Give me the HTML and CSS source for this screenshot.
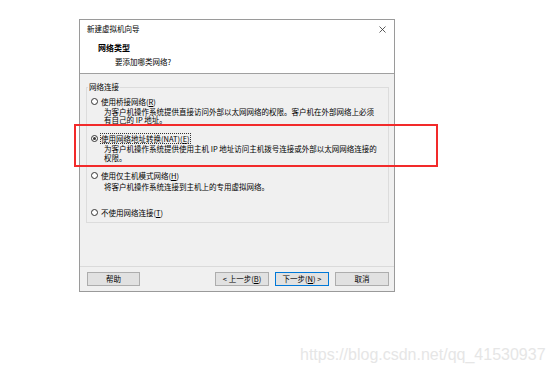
FILE: index.html
```html
<!DOCTYPE html>
<html lang="zh-CN">
<head>
  <meta charset="UTF-8">
  <meta name="viewport" content="width=device-width, initial-scale=1.0">
  <title>新建虚拟机向导</title>
  <link rel="stylesheet" href="styles.css">
</head>
<body>
  <div class="wizard">
    <div class="titlebar">
      <span class="title">新建虚拟机向导</span>
      <svg class="close" width="7" height="7" viewBox="0 0 7 7">
        <path d="M0.5 0.5 L6.5 6.5 M6.5 0.5 L0.5 6.5" stroke="#333" stroke-width="0.8" fill="none"/>
      </svg>
    </div>

    <div class="header">
      <div class="header-title">网络类型</div>
      <div class="header-sub">要添加哪类网络?</div>
    </div>

    <div class="content">
      <fieldset class="group">
        <legend>网络连接</legend>

        <div class="option">
          <div class="option-label"><span class="radio"></span><span>使用桥接网络(<u>R</u>)</span></div>
          <div class="option-desc">
            <div>为客户机操作系统提供直接访问外部以太网网络的权限。客户机在外部网络上必须</div>
            <div>有自己的 IP 地址。</div>
          </div>
        </div>

        <div class="option">
          <div class="option-label"><span class="radio checked"></span><span class="focus">使用网络地址转换(NAT)(<u>E</u>)</span></div>
          <div class="option-desc">
            <div>为客户机操作系统提供使用主机 IP 地址访问主机拨号连接或外部以太网网络连接的</div>
            <div>权限。</div>
          </div>
        </div>

        <div class="option">
          <div class="option-label"><span class="radio"></span><span>使用仅主机模式网络(<u>H</u>)</span></div>
          <div class="option-desc">
            <div>将客户机操作系统连接到主机上的专用虚拟网络。</div>
          </div>
        </div>

        <div class="option last">
          <div class="option-label"><span class="radio"></span><span>不使用网络连接(<u>T</u>)</span></div>
        </div>
      </fieldset>
    </div>

    <div class="footer">
      <button class="btn">帮助</button>
      <div class="spacer"></div>
      <button class="btn">&lt; 上一步(<u>B</u>)</button>
      <button class="btn default">下一步(<u>N</u>) &gt;</button>
      <button class="btn">取消</button>
    </div>
  </div>

  <!-- annotation drawn over the screenshot -->
  <div class="highlight"></div>
  <div class="watermark">https://blog.csdn.net/qq_41530937</div>
</body>
</html>
```

FILE: styles.css
```css
body {
  margin: 0;
  width: 553px;
  height: 375px;
  position: relative;
  background-color: #ffffff;
  font-family: "Noto Sans CJK SC", "Microsoft YaHei", sans-serif;
  font-size: 7.5px;
  color: #000;
  overflow: hidden;
}
.wizard {
  margin: 19px 0 0 79px;
  width: 316px;
  height: 273px;
  box-sizing: border-box;
  border: 1px solid #9a9a9a;
  background-color: #f0f0f0;
  display: flex;
  flex-direction: column;
}
.titlebar {
  height: 18px;
  background-color: #ffffff;
  display: flex;
  align-items: center;
  justify-content: space-between;
  padding: 0 8px 0 7px;
  line-height: 10px;
}
.close {
  display: block;
}
.header {
  height: 36px;
  box-sizing: border-box;
  background-color: #ffffff;
  padding: 5px 0 0 18px;
  border-bottom: 1px solid #a0a0a0;
}
.header-title {
  font-size: 8px;
  font-weight: bold;
  line-height: 10px;
}
.header-sub {
  line-height: 10px;
  margin-top: 4px;
  padding-left: 17px;
}
.content {
  height: 192px;
  box-sizing: border-box;
  padding: 8px 5px 0 6px;
}
.group {
  margin: 0;
  padding: 0 0 5px 0;
  border: 1px solid #dcdcdc;
  min-width: 0;
}
.group legend {
  margin-left: 1px;
  padding: 0 1px;
  line-height: 10px;
}
.option {
  height: 37.3px;
  padding-left: 4px;
}
.option:first-of-type {
  margin-top: 4.5px;
}
.option.last {
  height: auto;
}
.option-label {
  display: flex;
  align-items: center;
  line-height: 9px;
  height: 9px;
}
.radio {
  width: 7px;
  height: 7px;
  box-sizing: border-box;
  border: 1px solid #333;
  border-radius: 50%;
  background-color: #fff;
  margin-right: 3px;
  position: relative;
  flex-shrink: 0;
}
.radio.checked::after {
  content: '';
  position: absolute;
  left: 1px;
  top: 1px;
  width: 3px;
  height: 3px;
  border-radius: 50%;
  background-color: #333;
}
.focus {
  outline: 1px dotted #333;
  outline-offset: 0;
}
.option-desc {
  padding-left: 13px;
  margin-top: 2.5px;
  line-height: 8.2px;
  white-space: nowrap;
}
.footer {
  border-top: 1px solid #dadada;
  padding: 5px 5px 5px 7px;
  display: flex;
  align-items: center;
}
.spacer {
  flex: 1;
}
.btn {
  width: 54px;
  height: 14px;
  box-sizing: border-box;
  padding: 0;
  margin: 0 0 0 6px;
  border: 1px solid #adadad;
  background-color: #e1e1e1;
  font-family: inherit;
  font-size: 7.5px;
  line-height: 12px;
  color: #000;
}
.btn:first-child {
  margin-left: 0;
  width: 53px;
}
.btn.default {
  border-color: #0078d7;
}
.highlight {
  position: absolute;
  left: 74px;
  top: 124px;
  width: 364px;
  height: 43px;
  box-sizing: border-box;
  border: 2px solid #f22a2a;
}
.watermark {
  position: absolute;
  left: 300px;
  top: 346px;
  font-family: "Liberation Sans", Arial, sans-serif;
  font-size: 16px;
  line-height: 18px;
  color: #e6e6e6;
}
```
